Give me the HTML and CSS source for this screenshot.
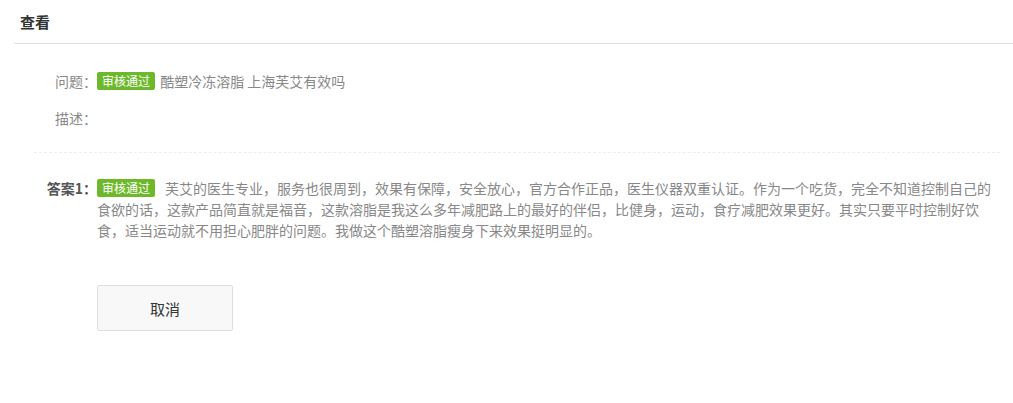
FILE: index.html
```html
<!DOCTYPE html>
<html lang="zh-CN">
	<head>
		<meta charset="UTF-8" />
		<meta name="viewport" content="width=device-width, initial-scale=1.0" />
		<title>查看</title>
		<link rel="stylesheet" href="styles.css">
	</head>
	<body>
		<div class="panel">
			<div class="panel-header">
				<h2>查看</h2>
			</div>

			<div class="detail">
				<div class="row">
					<label>问题：</label>
					<div class="value">
						<span class="tag">审核通过</span>
						<span class="question">酷塑冷冻溶脂 上海芙艾有效吗</span>
					</div>
				</div>
				<div class="row">
					<label>描述：</label>
					<div class="value"></div>
				</div>
			</div>

			<div class="answers">
				<div class="row answer">
					<label>答案1：</label>
					<div class="value"><span class="tag">审核通过</span><span class="answer-text">芙艾的医生专业，服务也很周到，效果有保障，安全放心，官方合作正品，医生仪器双重认证。作为一个吃货，完全不知道控制自己的食欲的话，这款产品简直就是福音，这款溶脂是我这么多年减肥路上的最好的伴侣，比健身，运动，食疗减肥效果更好。其实只要平时控制好饮食，适当运动就不用担心肥胖的问题。我做这个酷塑溶脂瘦身下来效果挺明显的。</span></div>
				</div>

				<div class="actions">
					<button type="button">取消</button>
				</div>
			</div>
		</div>
	</body>
</html>
```

FILE: styles.css
```css
body {
	margin: 0;
	font-family: "Noto Sans CJK SC", "Microsoft YaHei", sans-serif;
	font-size: 14px;
	color: #888;
	background: #fff;
}
.panel {
	margin-left: 14px;
}
.panel-header {
	height: 43px;
	border-bottom: 1px solid #ddd;
	display: flex;
	align-items: center;
	padding-left: 6px;
}
.panel-header h2 {
	margin: 0;
	font-size: 15px;
	font-weight: bold;
	color: #333;
}
.detail {
	padding: 27px 0 23px 0;
	margin: 0 13px 0 20px;
	border-bottom: 1px dashed #eee;
}
.row {
	display: flex;
	align-items: flex-start;
	line-height: 21px;
}
.row + .row {
	margin-top: 16px;
}
.row label {
	width: 63px;
	flex: none;
	text-align: right;
}
.value {
	flex: 1;
	min-height: 21px;
}
.tag {
	display: inline-block;
	background: #6eb92b;
	color: #fff;
	font-size: 12px;
	line-height: 18px;
	padding: 0 5px;
	border-radius: 2px;
	vertical-align: 1px;
}
.question {
	margin-left: 2px;
}
.answers {
	padding-top: 25px;
	margin-left: 20px;
}
.answer label {
	font-weight: bold;
	color: #555;
}
.answer .value {
	margin-right: 21px;
}
.answer-text {
	margin-left: 10px;
}
.actions {
	padding: 44px 0 0 63px;
}
button {
	width: 136px;
	height: 46px;
	background: #f8f8f8;
	border: 1px solid #ddd;
	border-radius: 2px;
	font-family: inherit;
	font-size: 15px;
	color: #333;
	cursor: pointer;
}
button:hover {
	background: #f0f0f0;
}
```
